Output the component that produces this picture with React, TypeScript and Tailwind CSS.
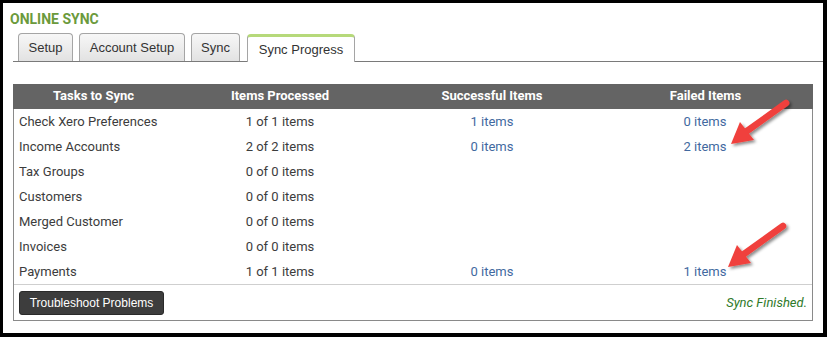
type SyncRow = {
  task: string;
  processed: string;
  success?: string;
  failed?: string;
};

const rows: SyncRow[] = [
  { task: "Check Xero Preferences", processed: "1 of 1 items", success: "1 items", failed: "0 items" },
  { task: "Income Accounts", processed: "2 of 2 items", success: "0 items", failed: "2 items" },
  { task: "Tax Groups", processed: "0 of 0 items" },
  { task: "Customers", processed: "0 of 0 items" },
  { task: "Merged Customer", processed: "0 of 0 items" },
  { task: "Invoices", processed: "0 of 0 items" },
  { task: "Payments", processed: "1 of 1 items", success: "0 items", failed: "1 items" },
];

const tabs = [
  { label: "Setup", width: "w-[55px]" },
  { label: "Account Setup", width: "w-[106px]" },
  { label: "Sync", width: "w-[49px]" },
];

function Arrow({ className }: { className: string }) {
  return (
    <svg className={className} width="72" height="56" viewBox="0 0 72 56">
      <defs>
        <filter id="arrowShadow" x="-30%" y="-30%" width="160%" height="160%">
          <feDropShadow dx="2" dy="2" stdDeviation="1.6" floodColor="#000" floodOpacity="0.45" />
        </filter>
      </defs>
      <g filter="url(#arrowShadow)">
        <line x1="61" y1="6" x2="22" y2="34" stroke="#f0413c" strokeWidth="6.5" strokeLinecap="round" />
        <polygon points="6,47 15,25 29,43" fill="#f0413c" />
      </g>
    </svg>
  );
}

export default function App() {
  return (
    <div className="relative h-[337px] w-[827px] bg-black pb-[4px] pl-[3px] pr-[4px] pt-[3px]">
      <div className="h-full bg-white font-['Roboto',sans-serif]">
        <div className="pl-[7px] pt-[8px] text-[14px] font-bold leading-[16px] text-[#6b9a3c]">
          ONLINE SYNC
        </div>

        <div className="ml-[10px] mt-[6px] flex h-[29px] items-end gap-[6px] border-b border-[#7a7a7a] pl-[5px] font-['Liberation_Sans',Arial,sans-serif] text-[13px] text-[#333]">
          {tabs.map((tab) => (
            <div
              key={tab.label}
              className={`${tab.width} flex h-[28px] items-center justify-center rounded-t-[4px] border border-b-0 border-[#a5a5a5] bg-gradient-to-b from-[#f7f7f7] to-[#e2e2e2]`}
            >
              {tab.label}
            </div>
          ))}
          <div className="-mb-px ml-px flex h-[28px] w-[108px] items-center justify-center rounded-t-[4px] border border-b-0 border-t-[3px] border-[#a5a5a5] border-t-[#b6d97a] bg-white pt-[1px]">
            Sync Progress
          </div>
        </div>

        <div className="mx-[10px] mt-[22px] w-[800px] text-[13px]">
          <div className="grid h-[25px] grid-cols-[161px_212px_212px_1fr] items-center bg-[#646464] pb-px text-center font-bold text-white">
            <div>Tasks to Sync</div>
            <div>Items Processed</div>
            <div>Successful Items</div>
            <div>Failed Items</div>
          </div>

          <div className="border-x border-b border-[#8a8a8a]">
            {rows.map((row) => (
              <div
                key={row.task}
                className="grid h-[25px] grid-cols-[160px_212px_212px_1fr] items-center"
              >
                <div className="pl-[5px] text-[#3c3c3c]">{row.task}</div>
                <div className="text-center text-[#3c3c3c]">{row.processed}</div>
                <div className="text-center text-[#4169a0]">{row.success}</div>
                <div className="text-center text-[#4169a0]">{row.failed}</div>
              </div>
            ))}

            <div className="flex items-center justify-between border-t border-[#cfcfcf] px-[5px] pb-[5px] pt-[6px]">
              <button className="h-[24px] w-[145px] rounded-[3px] border border-[#2a2a2a] bg-[#3d3d3d] font-['Liberation_Sans',Arial,sans-serif] text-[12px] text-white">
                Troubleshoot Problems
              </button>
              <span className="pb-[1px] italic text-[#2f7a2a]">Sync Finished.</span>
            </div>
          </div>
        </div>
      </div>

      <Arrow className="absolute left-[725px] top-[97px]" />
      <Arrow className="absolute left-[722px] top-[220px]" />
    </div>
  );
}
